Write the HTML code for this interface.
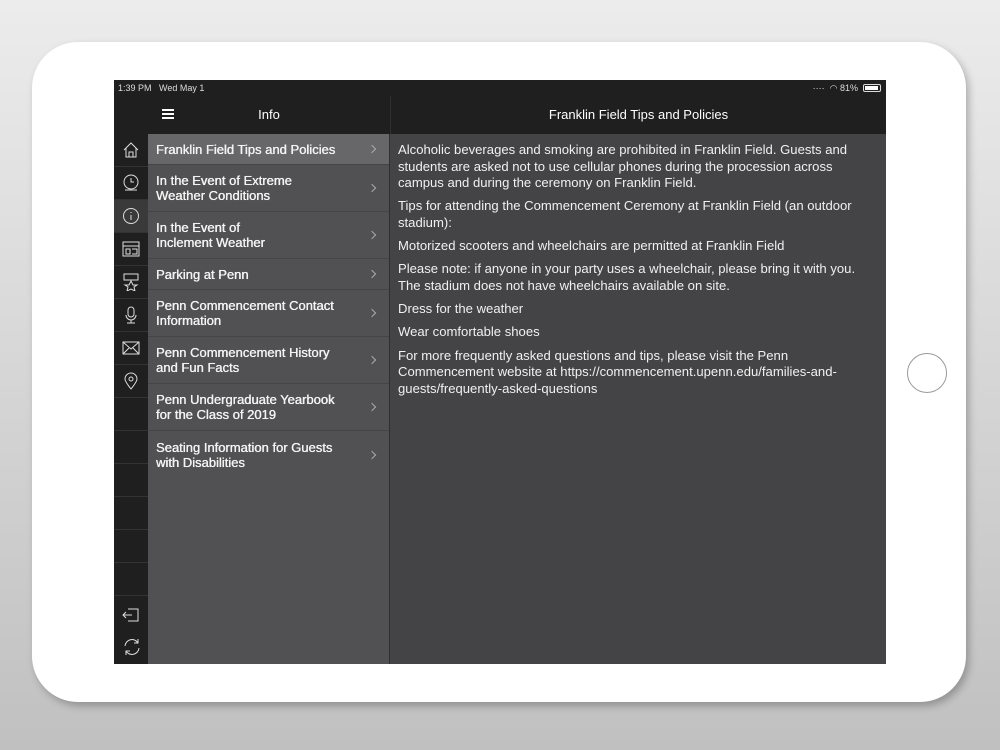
<!DOCTYPE html>
<html><head><style>
*{margin:0;padding:0;box-sizing:border-box}
body{width:1000px;height:750px;background:linear-gradient(#ececec,#c0c0c0);font-family:"Liberation Sans",sans-serif;position:relative;overflow:hidden}
.dev{position:absolute;left:32px;top:42px;width:934px;height:660px;background:#fff;border-radius:46px;box-shadow:3px 4px 8px rgba(0,0,0,.25)}
.home{position:absolute;left:907px;top:353px;width:40px;height:40px;border:1.5px solid #9a9a9a;border-radius:50%}
.scr{position:absolute;left:114px;top:80px;width:772px;height:584px;background:#444446;overflow:hidden}
.sb{position:absolute;left:0;top:0;width:772px;height:16px;background:#1f1f1f;color:#ddd;font-size:9px;line-height:16px}
.hdr{position:absolute;top:16px;height:38px;background:#1f1f1f;color:#fff;font-size:13px;line-height:38px;text-align:center}
.icons{position:absolute;left:0;top:16px;width:34px;height:568px;background:#1f1f1f}
.ic{position:absolute;left:0;width:34px;height:33px;border-bottom:1px solid #333}
.ic svg{position:absolute;left:8px;top:7px}
.list{position:absolute;left:34px;top:54px;width:242px;height:530px;background:#515153;border-right:1px solid #303030}
.it{position:relative;border-bottom:1px solid #454547;color:#f2f2f2;font-size:13px;line-height:15px;padding:0 30px 0 8px;display:flex;align-items:center;text-shadow:0 0 .4px #fff,.3px 0 0 #f2f2f2}
.it:after{content:"";position:absolute;right:14px;top:50%;width:5px;height:5px;border-right:1px solid #aaa;border-top:1px solid #aaa;transform:translateY(-50%) rotate(45deg)}
.ct{position:absolute;left:284px;top:62px;width:482px;color:#f0f0f0;font-size:13.1px;line-height:16.6px}
.ct p{margin-bottom:6.6px}
</style></head><body>
<div class="dev"></div><div class="home"></div>
<div class="scr">
<div class="sb"><span style="position:absolute;left:4px">1:39 PM&nbsp;&nbsp;&nbsp;Wed May 1</span><span style="position:absolute;right:28px">····&nbsp;&nbsp;◠&nbsp;81%</span><span style="position:absolute;right:5px;top:4px;width:18px;height:8px;border:1px solid #ddd;border-radius:2px"><span style="display:block;margin:1px;width:13px;height:4px;background:#fff"></span></span></div>
<div class="icons">
<div style="position:absolute;top:38px;left:0;width:34px;height:530px">
<div class="ic" style="top:0"><svg width="18" height="18" fill="none" stroke="#ddd"><path d="M2 9L9 2l7 7M4 7v9h10V7M7 16v-5h4v5"/></svg></div>
<div class="ic" style="top:33px"><svg width="18" height="18" fill="none" stroke="#ddd"><circle cx="9" cy="8" r="7"/><path d="M9 4v4h3M3 16h12"/></svg></div>
<div class="ic" style="top:66px;background:#3a3a3a"><svg width="18" height="18" fill="none" stroke="#ddd"><circle cx="9" cy="9" r="7.5"/><path d="M9 8v5M9 5v1"/></svg></div>
<div class="ic" style="top:99px"><svg width="18" height="18" fill="none" stroke="#ddd"><rect x="1" y="2" width="16" height="14"/><path d="M1 6h16M4 9h4v5H4zM10 9h5v5h-5"/></svg></div>
<div class="ic" style="top:132px"><svg width="18" height="18" fill="none" stroke="#ddd"><path d="M2 1h14v6H2zM9 8l2 4h4l-3 2 1 4-4-2-4 2 1-4-3-2h4z"/></svg></div>
<div class="ic" style="top:165px"><svg width="18" height="18" fill="none" stroke="#ddd"><rect x="6" y="1" width="6" height="10" rx="3"/><path d="M4 9a5 5 0 0010 0M9 14v3M5 17h8"/></svg></div>
<div class="ic" style="top:198px"><svg width="18" height="18" fill="none" stroke="#ddd"><rect x="1" y="3" width="16" height="12"/><path d="M1 3l8 7 8-7M1 15l6-6M17 15l-6-6"/></svg></div>
<div class="ic" style="top:231px"><svg width="18" height="18" fill="none" stroke="#ddd"><path d="M9 17C5 12 3 9 3 7a6 6 0 0112 0c0 2-2 5-6 10z"/><circle cx="9" cy="7" r="2"/></svg></div>
<div class="ic" style="top:264px"></div><div class="ic" style="top:297px"></div><div class="ic" style="top:330px"></div><div class="ic" style="top:363px"></div><div class="ic" style="top:396px"></div><div class="ic" style="top:429px"></div>
<div class="ic" style="top:462px;border:0"><svg width="18" height="18" fill="none" stroke="#ddd" style="top:10px"><path d="M6 3h10v12H6M1 9h9M4 6L1 9l3 3"/></svg></div>
<div class="ic" style="top:495px;border:0"><svg width="20" height="20" fill="none" stroke="#ddd" style="top:8px"><path d="M3 9a7 7 0 0113-3M17 11a7 7 0 01-13 3M16 2v4h-4M4 18v-4h4"/></svg></div>
</div>
</div>
<div class="hdr" style="left:34px;width:242px">Info<span style="position:absolute;left:14px;top:13px;width:12px;height:10px;border-top:2px solid #fff;border-bottom:2px solid #fff"><span style="display:block;margin-top:2px;height:2px;background:#fff"></span></span></div>
<div class="hdr" style="left:276px;width:496px;border-left:1px solid #303030">Franklin Field Tips and Policies</div>
<div class="list">
<div class="it" style="height:31px;background:#67676a">Franklin Field Tips and Policies</div>
<div class="it" style="height:47px">In the Event of Extreme<br>Weather Conditions</div>
<div class="it" style="height:47px">In the Event of<br>Inclement Weather</div>
<div class="it" style="height:31px">Parking at Penn</div>
<div class="it" style="height:47px">Penn Commencement Contact<br>Information</div>
<div class="it" style="height:47px">Penn Commencement History<br>and Fun Facts</div>
<div class="it" style="height:47px">Penn Undergraduate Yearbook<br>for the Class of 2019</div>
<div class="it" style="height:47px;border:0">Seating Information for Guests<br>with Disabilities</div>
</div>
<div class="ct">
<p>Alcoholic beverages and smoking are prohibited in Franklin Field. Guests and students are asked not to use cellular phones during the procession across campus and during the ceremony on Franklin Field.</p>
<p>Tips for attending the Commencement Ceremony at Franklin Field (an outdoor stadium):</p>
<p>Motorized scooters and wheelchairs are permitted at Franklin Field</p>
<p>Please note: if anyone in your party uses a wheelchair, please bring it with you. The stadium does not have wheelchairs available on site.</p>
<p>Dress for the weather</p>
<p>Wear comfortable shoes</p>
<p>For more frequently asked questions and tips, please visit the Penn Commencement website at https://commencement.upenn.edu/families-and-guests/frequently-asked-questions</p>
</div>
</div>
</body></html>
